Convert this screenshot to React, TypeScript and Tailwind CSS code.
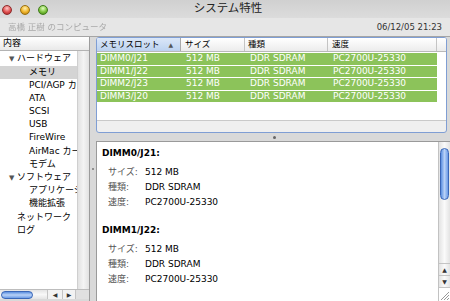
import React from "react";

const font = "font-['DejaVu_Sans','Noto_Sans_CJK_JP',sans-serif]";

const tree = [
  { label: "ハードウェア", level: 0, open: true },
  { label: "メモリ", level: 1, selected: true },
  { label: "PCI/AGP カード", level: 1 },
  { label: "ATA", level: 1 },
  { label: "SCSI", level: 1 },
  { label: "USB", level: 1 },
  { label: "FireWire", level: 1 },
  { label: "AirMac カード", level: 1 },
  { label: "モデム", level: 1 },
  { label: "ソフトウェア", level: 0, open: true },
  { label: "アプリケーション", level: 1 },
  { label: "機能拡張", level: 1 },
  { label: "ネットワーク", level: 0 },
  { label: "ログ", level: 0 },
];

const slots = ["DIMM0/J21", "DIMM1/J22", "DIMM2/J23", "DIMM3/J20"];

function Light({ color }: { color: "red" | "yellow" | "green" }) {
  const bg =
    color === "red"
      ? "bg-[radial-gradient(circle_at_50%_30%,#ffc9c9,#e0504f_55%,#9e1f1f)] border-[#8d2b2b]"
      : color === "yellow"
      ? "bg-[radial-gradient(circle_at_50%_30%,#fff0b0,#f0b429_55%,#a8700c)] border-[#99700f]"
      : "bg-[radial-gradient(circle_at_50%_30%,#e2ffc0,#7cc23c_55%,#3d7f14)] border-[#3f7a1a]";
  return <div className={`w-[10px] h-[10px] rounded-full border ${bg}`} />;
}

function Thumb({ vertical }: { vertical?: boolean }) {
  return (
    <div
      className={`rounded-full border border-[#3a67b8] ${
        vertical
          ? "bg-gradient-to-r from-[#5b8fe0] via-[#b9d2f7] to-[#6b9be6]"
          : "bg-gradient-to-b from-[#5b8fe0] via-[#b9d2f7] to-[#6b9be6]"
      } w-full h-full`}
    />
  );
}

export default function App() {
  return (
    <div className={`w-[450px] h-[301px] overflow-hidden flex flex-col bg-[#d9d9d9] text-black ${font}`}>
      {/* title bar */}
      <div className="h-[18px] grid grid-cols-[60px_1fr_60px] items-center bg-gradient-to-b from-[#d0d0d0] to-[#dcdcdc]">
        <div className="flex gap-[8px] pl-[2px] pt-[1px]">
          <Light color="red" />
          <Light color="yellow" />
          <Light color="green" />
        </div>
        <div className="text-center text-[11.5px] text-[#222] pl-[6px] leading-none">システム特性</div>
        <div />
      </div>

      {/* toolbar */}
      <div className="h-[19px] flex items-center justify-between px-[8px] bg-[#e6e6e6] border-b border-[#a5a5a5] text-[8.5px]">
        <span className="text-[#a9a9a9] blur-[0.4px]">高橋 正樹 のコンピュータ</span>
        <span className="text-[#333]">06/12/05 21:23</span>
      </div>

      {/* body */}
      <div className="flex-1 flex min-h-0">
        {/* sidebar */}
        <div className="w-[90px] flex flex-col border-r border-[#9c9c9c] pb-[2px]">
          <div className="h-[14px] flex items-center pl-[3px] text-[9px] bg-gradient-to-b from-white to-[#e9e9e9] border-b border-[#b3b3b3]">
            内容
          </div>
          <div className="flex-1 flex min-h-0">
            <div className="w-[77px] bg-white overflow-hidden pt-[1.5px] text-[9px]">
              {tree.map((t) => (
                <div
                  key={t.label}
                  className={`h-[13.2px] flex items-center whitespace-nowrap overflow-hidden ${
                    t.selected ? "bg-[#d4d4d4]" : ""
                  } ${t.level === 1 ? "pl-[29px]" : t.open ? "pl-[9px]" : "pl-[17px]"}`}
                >
                  {t.open && <span className="w-[8px] text-[7px] text-[#555]">▼</span>}
                  <span>{t.label}</span>
                </div>
              ))}
            </div>
            <div className="flex-1 bg-gradient-to-r from-[#e2e2e2] via-[#f4f4f4] to-[#e2e2e2] border-l border-[#cfcfcf]" />
          </div>
          <div className="h-[10px] flex bg-[#f2f2f2] border-t border-[#bdbdbd]">
            <div className="w-[47px] px-[1px] py-[0.5px] bg-gradient-to-b from-[#e4e4e4] via-[#f8f8f8] to-[#e4e4e4]">
              <div className="w-[32px] h-full">
                <Thumb />
              </div>
            </div>
            <div className="w-[15px] flex items-center justify-center text-[6px] text-[#333] border-l border-[#c4c4c4]">◀</div>
            <div className="w-[13px] flex items-center justify-center text-[6px] text-[#333] border-l border-[#c4c4c4]">▶</div>
            <div className="flex-1 bg-[#e0e0e0] border-l border-[#c4c4c4]" />
          </div>
        </div>

        {/* vertical splitter */}
        <div className="w-[6px] flex justify-center pt-[131px]">
          <div className="w-[2px] h-[2px] rounded-full bg-[#777]" />
        </div>

        {/* right column */}
        <div className="flex-1 flex flex-col min-w-0">
          {/* table panel */}
          <div className="h-[96px] mr-[3px] rounded-[3px] border border-[#7f9ed4] bg-[#efefef] flex flex-col overflow-hidden">
            <div className="h-[83px] bg-white border-b border-[#c9c9c9] flex">
              <div className="w-[340px] flex flex-col">
                <div className="h-[14px] flex text-[8.5px] border-b border-[#b9b9b9]">
                  <div className="w-[84px] flex items-center pl-[3px] gap-[9px] bg-gradient-to-b from-[#dbe7f8] to-[#bcd2f0] border-r border-[#a9a9a9]">
                    <span>メモリスロット</span>
                    <span className="text-[6px] text-[#555]">▲</span>
                  </div>
                  <div className="w-[64px] flex items-center pl-[4px] bg-gradient-to-b from-white to-[#ececec] border-r border-[#c4c4c4]">
                    サイズ
                  </div>
                  <div className="w-[83px] flex items-center pl-[3px] bg-gradient-to-b from-white to-[#ececec] border-r border-[#c4c4c4]">
                    種類
                  </div>
                  <div className="w-[109px] flex items-center pl-[4px] bg-gradient-to-b from-white to-[#ececec] border-r border-[#c4c4c4]">
                    速度
                  </div>
                </div>
                {slots.map((s) => (
                  <div key={s} className="h-[11.5px] mt-[1px] flex items-center bg-[#8cc35a] text-white text-[9px] whitespace-nowrap">
                    <div className="w-[84px] pl-[3px]">{s}</div>
                    <div className="w-[64px] pl-[5px]">512 MB</div>
                    <div className="w-[83px] pl-[5px]">DDR SDRAM</div>
                    <div className="w-[109px] pl-[5px]">PC2700U-25330</div>
                  </div>
                ))}
              </div>
              <div className="flex-1 flex flex-col">
                <div className="h-[14px] bg-gradient-to-b from-white to-[#ececec] border-b border-[#b9b9b9]" />
              </div>
            </div>
          </div>

          {/* horizontal splitter */}
          <div className="h-[8px] flex justify-center items-center pl-[3px]">
            <div className="w-[3px] h-[3px] rounded-full bg-[#666]" />
          </div>

          {/* detail pane */}
          <div className="flex-1 flex bg-white border-t border-l border-[#9a9a9a] min-h-0">
            <div className="flex-1 pl-[5px] pt-[5.5px] text-[9px]">
              {slots.slice(0, 2).map((s, i) => (
                <div key={s} className={i === 0 ? "" : "mt-[15px]"}>
                  <div className="h-[11px] leading-[11px] font-bold">{s}:</div>
                  <div className="mt-[6.5px] pl-[6px]">
                    {[
                      ["サイズ:", "512 MB"],
                      ["種類:", "DDR SDRAM"],
                      ["速度:", "PC2700U-25330"],
                    ].map(([k, v]) => (
                      <div key={k} className="h-[15px] flex items-center">
                        <span className="w-[37px] text-[#555]">{k}</span>
                        <span>{v}</span>
                      </div>
                    ))}
                  </div>
                </div>
              ))}
            </div>
            <div className="w-[12px] flex flex-col bg-gradient-to-r from-[#e3e3e3] via-[#fafafa] to-[#e3e3e3] border-l border-[#c2c2c2]">
              <div className="h-[52px] mt-[6px] mx-[1px]">
                <Thumb vertical />
              </div>
              <div className="flex-1" />
              <div className="h-[12px] flex items-center justify-center text-[6px] text-[#333] border-t border-[#c4c4c4]">▲</div>
              <div className="h-[12px] flex items-center justify-center text-[6px] text-[#333] border-t border-[#c4c4c4]">▼</div>
              <div className="h-[14px] bg-white border-t border-[#c4c4c4] flex items-end justify-end">
                <svg width="11" height="11" viewBox="0 0 11 11">
                  <path d="M10 2 L2 10 M10 5 L5 10 M10 8 L8 10" stroke="#999" strokeWidth="1" />
                </svg>
              </div>
            </div>
          </div>
        </div>
      </div>
    </div>
  );
}
